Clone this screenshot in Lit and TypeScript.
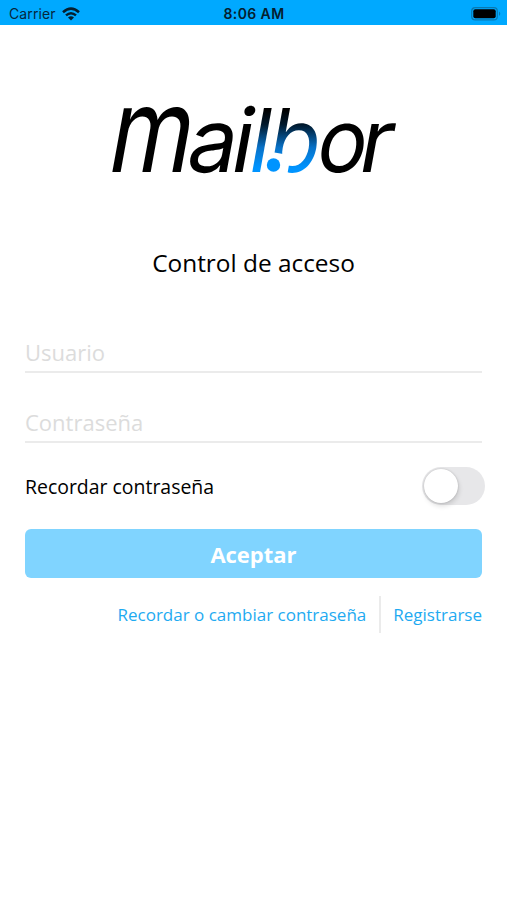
import { LitElement, html, css } from "lit";
import { customElement, state } from "lit/decorators.js";

@customElement("app-root")
export class AppRoot extends LitElement {
  static styles = css`
    :host { display: flex; flex-direction: column; height: 900px; background: #fff; color: #000; font-family: "Open Sans", "Noto Sans", sans-serif; overflow: hidden; }
    * { box-sizing: border-box; }
    .status { flex: none; height: 25px; background: #00a9ff; display: grid; grid-template-columns: 1fr auto 1fr; align-items: center; padding: 2px 5px 0 9px; font: 14px/22px Inter, sans-serif; color: #06273d; }
    .left { display: flex; align-items: center; gap: 6px; }
    .carrier { letter-spacing: .12px; }
    .time { font-weight: 600; font-size: 14px; letter-spacing: .4px; margin-left: -3px; color: #05202f; }
    .battery { justify-self: end; }
    svg { display: block; flex: none; }
    .logo { margin: 35px 0 0 100px; overflow: visible; }
    h1 { margin: 37px 0 0; text-align: center; font-size: 24.4px; line-height: 32px; font-weight: 400; }
    form { padding: 0 25px; display: flex; flex-direction: column; }
    .field { display: block; width: 100%; padding: 0 0 2px; border: 0; border-bottom: 2px solid #ebebeb; border-radius: 0; outline: 0; background: none; font: 22px/30px "Open Sans", sans-serif; height: 38px; color: #000; }
    .field::placeholder { color: #dcdcdc; opacity: 1; }
    .user { margin-top: 56px; }
    .pass { margin-top: 32px; }
    .remember { display: flex; justify-content: space-between; align-items: center; height: 38px; margin: 24px -3px 0 0; font-size: 19.45px; }
    .switch { width: 63px; height: 38px; border: 0; padding: 2px; border-radius: 19px; background: #e7e7e9; }
    .knob { display: block; width: 34px; height: 34px; border-radius: 50%; background: #fff; box-shadow: 0 0 2px #0003, 1px 3px 5px #0002; }
    .accept { height: 49px; margin-top: 24px; border: 0; border-radius: 6px; padding: 0; background: #80d4ff; color: #fff; font: 700 22px/30px "Open Sans", sans-serif; }
    .links { display: flex; justify-content: flex-end; align-items: center; height: 37px; margin-top: 18px; font-size: 17px; color: #1eaaf1; }
    .rule { width: 2px; height: 37px; background: #ebebeb; margin: 0 12px 0 13px; }
    .word { font-family: Inter, sans-serif; font-weight: 400; }
  `;

  @state() private remember = false;

  render() {
    return html`
      <div class="status">
        <div class="left"><span class="carrier">Carrier</span>
          <svg width="18" height="14" viewBox="0 0 18 14" fill="none" stroke="#05202f" stroke-width="2.5"><path d="M1 5.2Q9-2 17 5.2M4 8.4Q9 4 14 8.4"/><path d="M6 10.5Q9 8 12 10.5L9 13.6Z" fill="#05202f" stroke="none"/></svg>
        </div>
        <span class="time">8:06 AM</span>
        <svg class="battery" width="31" height="14" viewBox="0 0 31 14"><rect x=".7" y=".7" width="25.6" height="12.2" rx="3.5" fill="none" stroke="#0879b2" stroke-width="1.2"/><rect x="2.3" y="2.3" width="22.4" height="9" rx="2" fill="#000"/><path d="M28 4.5Q30.5 6.7 28 9Z" fill="#0879b2"/></svg>
      </div>
      <svg class="logo word" width="307" height="150" viewBox="100 60 307 150" font-size="88">
        <defs><linearGradient id="ink" gradientUnits="userSpaceOnUse" x1="0" y1="-62" x2="0" y2="-4"><stop offset="0" stop-color="#000"/><stop offset=".25" stop-color="#00182c"/><stop offset=".65" stop-color="#0872c8"/><stop offset="1" stop-color="#0094ff"/></linearGradient></defs>
        <g transform="translate(0 172) skewX(-10.3)">
          <text transform="translate(105 0) scale(.81 1)" font-size="117">m</text>
          <text x="184" y="0">a</text><text x="228" y="0">i</text>
          <text transform="translate(264.5 0) scale(.96 1)" fill="url(#ink)">b</text>
        </g>
        <path d="M266 151L283 154Q284 164 289 165L287 176H264Z" fill="#fff"/>
        <g transform="translate(0 172) skewX(-10.3)">
          <text x="245.5" y="0" fill="url(#ink)">l</text>
          <text transform="translate(313.5 0) scale(.94 1)">o</text><text x="356" y="0">r</text>
        </g>
        <circle cx="273.5" cy="165" r="6.7" fill="#0094ff"/>
      </svg>
      <h1>Control de acceso</h1>
      <form @submit=${(e: Event) => e.preventDefault()}>
        <input class="field user" placeholder="Usuario" aria-label="Usuario">
        <input class="field pass" type="password" placeholder="Contraseña" aria-label="Contraseña">
        <div class="remember"><span>Recordar contraseña</span>
          <button class="switch" type="button" role="switch" aria-label="Recordar contraseña" aria-checked=${this.remember} @click=${() => (this.remember = !this.remember)}><span class="knob"></span></button>
        </div>
        <button class="accept">Aceptar</button>
        <div class="links"><span>Recordar o cambiar contraseña</span><span class="rule"></span><span>Registrarse</span></div>
      </form>`;
  }
}
